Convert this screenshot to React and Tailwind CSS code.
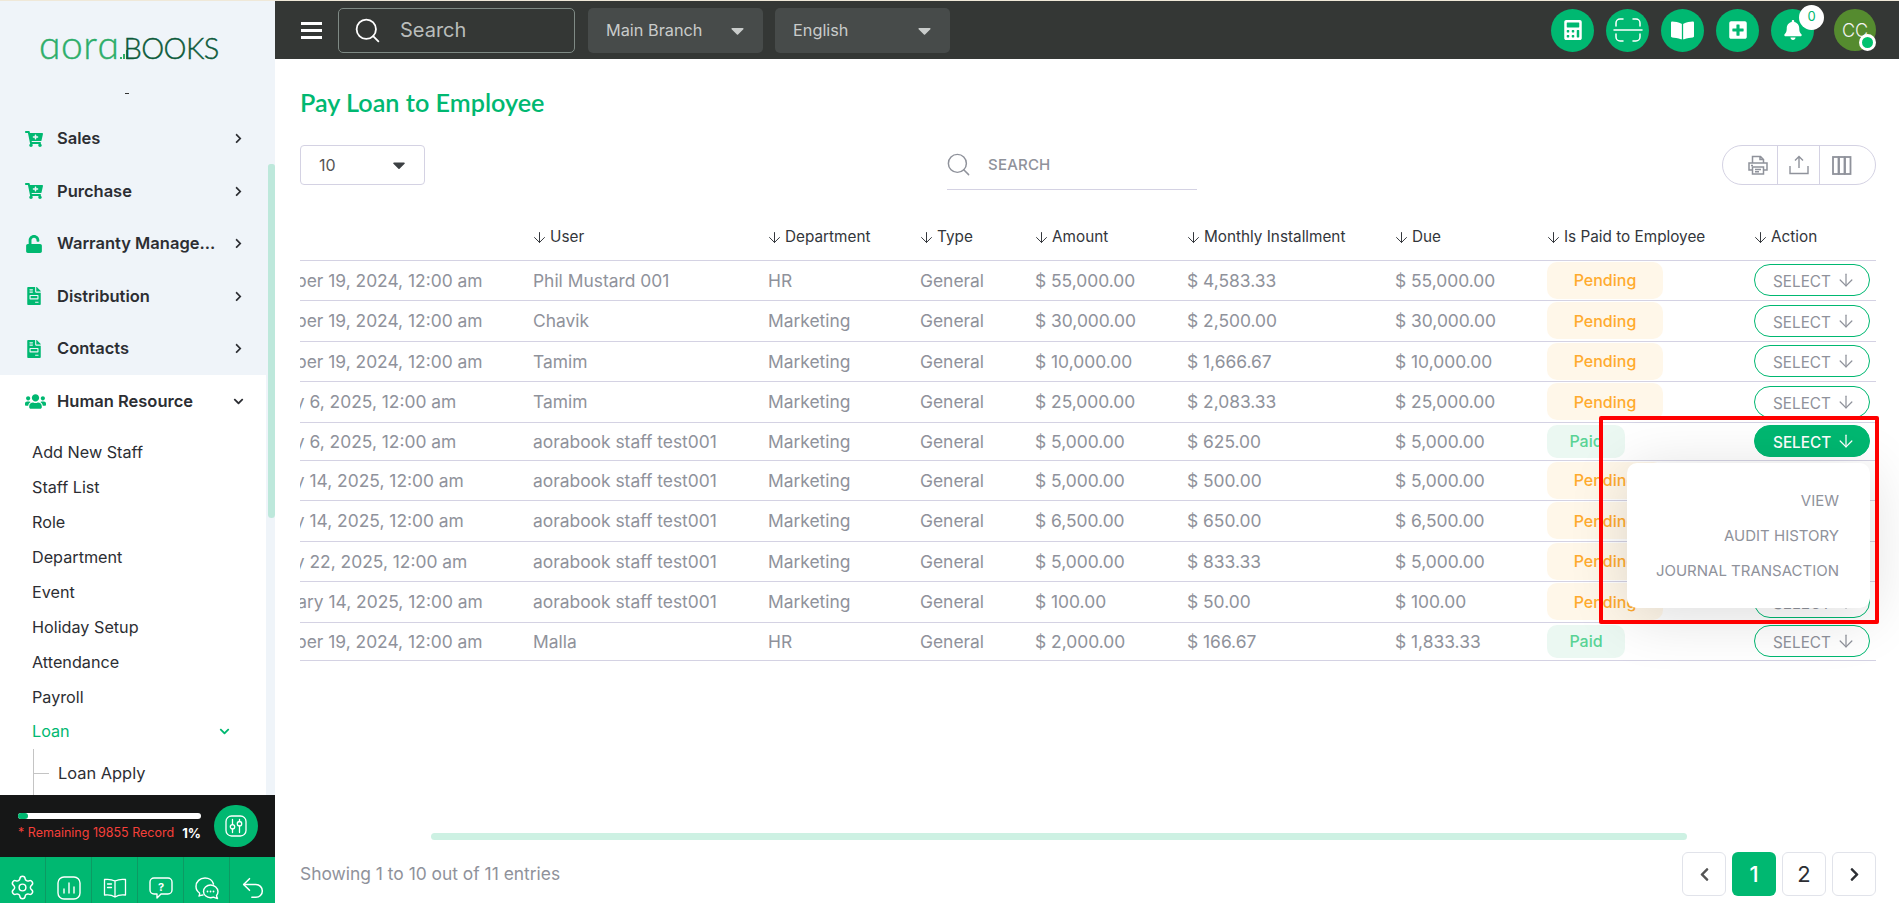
import React from 'react';
import { FaCartPlus, FaUnlock, FaFileInvoice, FaUsers, FaChevronRight, FaChevronDown, FaChevronLeft, FaCalculator, FaBookOpen, FaPlusSquare, FaBell, FaCaretDown } from 'react-icons/fa';
import { ArrowDown, Search, Settings, Undo2 } from 'lucide-react';

const rows = [
  ['November 19, 2024, 12:00 am', 'Phil Mustard 001', 'HR', '$ 55,000.00', '$ 4,583.33', '$ 55,000.00', 'Pending', 'h-[40px]'],
  ['November 19, 2024, 12:00 am', 'Chavik', 'Marketing', '$ 30,000.00', '$ 2,500.00', '$ 30,000.00', 'Pending', 'h-[41px]'],
  ['November 19, 2024, 12:00 am', 'Tamim', 'Marketing', '$ 10,000.00', '$ 1,666.67', '$ 10,000.00', 'Pending', 'h-[40px]'],
  ['January 6, 2025, 12:00 am', 'Tamim', 'Marketing', '$ 25,000.00', '$ 2,083.33', '$ 25,000.00', 'Pending', 'h-[41px]'],
  ['January 6, 2025, 12:00 am', 'aorabook staff test001', 'Marketing', '$ 5,000.00', '$ 625.00', '$ 5,000.00', 'Paid', 'h-[38px]'],
  ['January 14, 2025, 12:00 am', 'aorabook staff test001', 'Marketing', '$ 5,000.00', '$ 500.00', '$ 5,000.00', 'Pending', 'h-[40px]'],
  ['January 14, 2025, 12:00 am', 'aorabook staff test001', 'Marketing', '$ 6,500.00', '$ 650.00', '$ 6,500.00', 'Pending', 'h-[41px]'],
  ['January 22, 2025, 12:00 am', 'aorabook staff test001', 'Marketing', '$ 5,000.00', '$ 833.33', '$ 5,000.00', 'Pending', 'h-[40px]'],
  ['February 14, 2025, 12:00 am', 'aorabook staff test001', 'Marketing', '$ 100.00', '$ 50.00', '$ 100.00', 'Pending', 'h-[41px]', 'pl-[12px]'],
  ['November 19, 2024, 12:00 am', 'Malla', 'HR', '$ 2,000.00', '$ 166.67', '$ 1,833.33', 'Paid', 'h-[38px]'],
];

const mainNav = [
  ['Sales', FaCartPlus],
  ['Purchase', FaCartPlus],
  ['Warranty Manage...', FaUnlock],
  ['Distribution', FaFileInvoice],
  ['Contacts', FaFileInvoice],
];

const subNav = ['Add New Staff', 'Staff List', 'Role', 'Department', 'Event', 'Holiday Setup', 'Attendance', 'Payroll'];

const headers = ['User', 'Department', 'Type', 'Amount', 'Monthly Installment', 'Due', 'Is Paid to Employee', 'Action'];

function RoundIcon({ children }) {
  return <div className="flex h-[43px] w-[43px] items-center justify-center rounded-full bg-[#00b871] text-white">{children}</div>;
}

function FootIcon({ children, last }) {
  return <div className={`flex h-full flex-1 items-center justify-center pt-[15px] text-white ${last ? '' : 'border-r border-[#0c9a63]'}`}>{children}</div>;
}

function Logo() {
  return (
    <div className="mt-[18px] flex h-[40px] items-baseline pl-[39px] pt-[6px] leading-none">
      <span className="text-[39px] tracking-[0.5px] text-[#2dae69] [-webkit-text-stroke:0.4px_#2dae69]" style={{ fontFamily: 'Lato, sans-serif', fontWeight: 300 }}>ɑorɑ</span>
      <svg width="9" height="12" viewBox="0 0 9 12" className="flex-none"><path d="M0 12V10h2v2zM3 12V7h2v5zM6 12V3h2v9z" fill="#2dae69" /></svg>
      <span className="ml-[-5px] text-[29px] tracking-[-0.6px] text-[#0c5a3a] [-webkit-text-stroke:0.4px_#0c5a3a]" style={{ fontFamily: 'Lato, sans-serif', fontWeight: 300 }}>BOOKS</span>
    </div>
  );
}

function Sidebar() {
  return (
    <aside className="flex h-full w-[275px] flex-none flex-col bg-[#eff4f9]">
      <div className="flex min-h-0 flex-1">
        <div className="flex w-[266px] flex-none flex-col overflow-hidden">
          <div className="h-[111.25px] flex-none">
            <Logo />
            <div className="mt-[34px] ml-[125px] h-px w-[4px] bg-[#333]"></div>
          </div>
          {mainNav.map(([label, Icon]) => (
            <div key={label} className="flex h-[52.5px] flex-none items-center pl-[25px] pr-[22px] text-[#2c2e33]">
              <span className="flex w-[32px] flex-none text-[#00b871]"><Icon size={18} /></span>
              <span className="flex-1 whitespace-nowrap text-[16.5px] font-semibold">{label}</span>
              <FaChevronRight size={11} />
            </div>
          ))}
          <div className="flex-1 bg-white">
            <div className="flex h-[52.5px] items-center pl-[25px] pr-[22px] text-[#2c2e33]">
              <span className="flex w-[32px] flex-none text-[#00b871]"><FaUsers size={21} /></span>
              <span className="flex-1 text-[16.5px] font-semibold">Human Resource</span>
              <FaChevronDown size={11} />
            </div>
            <div className="pt-[7.25px] pl-[32px] text-[#2c2e33]">
              {subNav.map((s) => (
                <div key={s} className="flex h-[35px] items-center text-[16.2px]">{s}</div>
              ))}
              <div className="flex h-[34px] items-center pr-[36px] text-[16.2px] text-[#00b871]">
                <span className="flex-1">Loan</span>
                <FaChevronDown size={11} />
              </div>
              <div className="relative ml-[1px] flex h-[50px] items-center border-l border-[#c4c4c4] pl-[24px] text-[16.4px]">
                <span className="absolute left-0 top-[24px] h-px w-[15px] bg-[#c4c4c4]"></span>
                Loan Apply
              </div>
            </div>
          </div>
        </div>
        <div className="w-[9px] flex-none pl-[2px] pt-[163px]">
          <div className="h-[354px] w-[7px] rounded-t-[3px] rounded-b-[4px] bg-[#bde8db]"></div>
        </div>
      </div>
      <div className="flex h-[62px] flex-none items-start bg-[#161717] pl-[18px] text-white">
        <div className="w-[183px] pt-[18px]">
          <div className="h-[6px] w-full rounded-full bg-white">
            <div className="h-[6px] w-[10px] rounded-full bg-[#00b871]"></div>
          </div>
          <div className="mt-[6px] flex items-center justify-between whitespace-nowrap text-[12.5px] leading-[16px]">
            <span className="text-[#f5403a]">* Remaining 19855 Record</span>
            <span className="text-[13px] font-bold">1%</span>
          </div>
        </div>
        <div className="ml-[13px] mt-[10px] flex h-[42px] w-[44px] items-center justify-center rounded-full bg-[#00b871]">
          <svg width="22" height="22" viewBox="0 0 22 22" fill="none" stroke="white" strokeWidth="1.3" strokeLinecap="round">
            <rect x="1" y="1" width="20" height="20" rx="5.5" />
            <path d="M7.5 4.5v5M7.5 14v3.5M14.5 4.5v2M14.5 11v6.5" />
            <circle cx="7.5" cy="11.8" r="2.2" />
            <circle cx="14.5" cy="8.7" r="2.2" />
          </svg>
        </div>
      </div>
      <div className="flex h-[46px] flex-none bg-[#00b871]">
        <FootIcon><Settings size={27} strokeWidth={1.3} /></FootIcon>
        <FootIcon>
          <svg width="24" height="24" viewBox="0 0 24 24" fill="none" stroke="white" strokeWidth="1.4" strokeLinecap="round">
            <rect x="1" y="1" width="22" height="22" rx="6" /><path d="M7 17v-4M12 17V7M17 17v-6" />
          </svg>
        </FootIcon>
        <FootIcon>
          <svg width="24" height="22" viewBox="0 0 24 22" fill="none" stroke="white" strokeWidth="1.3" strokeLinejoin="round" strokeLinecap="round">
            <path d="M12 4C9 2.500 5 2 1.500 2.500V18c3.500-.5 7.500 0 10.500 2 3-2 7-2.500 10.500-2V2.500C19 2 15 2.500 12 4zM12 4v16M4.500 7h4M4.500 10.500h4" />
          </svg>
        </FootIcon>
        <FootIcon>
          <svg width="24" height="24" viewBox="0 0 24 24" fill="none" stroke="white" strokeWidth="1.4" strokeLinejoin="round">
            <path d="M5 2h14a4 4 0 0 1 4 4v8a4 4 0 0 1-4 4h-7l-4 4v-4H5a4 4 0 0 1-4-4V6a4 4 0 0 1 4-4z" />
            <text x="12" y="14.500" textAnchor="middle" fontSize="11" fontWeight="700" fill="white" stroke="none" fontFamily="Inter, sans-serif">?</text>
          </svg>
        </FootIcon>
        <FootIcon>
          <svg width="24" height="24" viewBox="0 0 24 24" fill="none" stroke="white" strokeWidth="1.4" strokeLinejoin="round" strokeLinecap="round">
            <path d="M8 19c-1 0-2 .5-4 1 .5-1 1-2 .5-3C2.500 15.500 1 13 1 10.500 1 5.500 5 2 10 2c4 0 7.500 2.500 8.500 6" />
            <path d="M15.500 9c4 0 7.500 3 7.500 6.500 0 1.500-.5 3-1.500 4 0 1 .5 2 1 3-1.500-.3-3-.8-4-1.300-1 .3-2 .5-3 .5-4 0-7-3-7-6.200S11.500 9 15.500 9z" />
            <path d="M12.500 15.500h.01M15.500 15.500h.01M18.500 15.500h.01" strokeWidth="1.8" />
          </svg>
        </FootIcon>
        <FootIcon last><Undo2 size={28} strokeWidth={1.3} /></FootIcon>
      </div>
    </aside>
  );
}

function Header() {
  return (
    <header className="flex h-[58px] flex-none items-center bg-[#343735] pl-[26px] pr-[23px]">
      <div className="flex w-[21px] flex-none flex-col gap-[4px]">
        <span className="h-[3px] bg-white"></span>
        <span className="h-[3px] bg-white"></span>
        <span className="h-[3px] bg-white"></span>
      </div>
      <div className="ml-[16px] flex h-[45px] w-[237px] flex-none items-center rounded-[5px] border border-[#7f8a85] pl-[14px] text-[#b9bdbb]">
        <Search size={29} strokeWidth={1.5} className="text-white" />
        <span className="ml-[18px] text-[20px]">Search</span>
      </div>
      <div className="ml-[13px] flex h-[45px] w-[175px] flex-none items-center justify-between rounded-[5px] bg-[#474b4a] pl-[18px] pr-[15px] text-[16.3px] text-[#c9cccb]">
        <span>Main Branch</span><FaCaretDown size={21} />
      </div>
      <div className="ml-[12px] flex h-[45px] w-[175px] flex-none items-center justify-between rounded-[5px] bg-[#474b4a] pl-[18px] pr-[15px] text-[16.3px] text-[#c9cccb]">
        <span>English</span><FaCaretDown size={21} />
      </div>
      <div className="ml-auto flex items-center gap-[12px]">
        <RoundIcon><FaCalculator size={20} /></RoundIcon>
        <RoundIcon>
          <svg width="30" height="24" viewBox="0 0 30 24" fill="none" stroke="white" strokeWidth="1.5" strokeLinecap="round">
            <path d="M10 1H7a4 4 0 0 0-4 4v3M20 1h3a4 4 0 0 1 4 4v3M10 23H7a4 4 0 0 1-4-4v-3M20 23h3a4 4 0 0 0 4-4v-3M1 12h28" />
          </svg>
        </RoundIcon>
        <RoundIcon><FaBookOpen size={23} /></RoundIcon>
        <RoundIcon><FaPlusSquare size={20} /></RoundIcon>
        <div className="relative">
          <RoundIcon><FaBell size={20} /></RoundIcon>
          <span className="absolute left-[28px] top-[-4px] flex h-[25px] w-[25px] items-center justify-center rounded-full bg-white text-[13px] text-[#00b871]">0</span>
        </div>
        <div className="relative ml-[8px] flex h-[42px] w-[42px] items-center justify-center rounded-full bg-[#558b2f] text-[18px] font-light text-[#f2f2f2]">
          CC
          <span className="absolute bottom-0 right-0 h-[17px] w-[17px] rounded-full border-[3px] border-white bg-[#00c26e]"></span>
        </div>
      </div>
    </header>
  );
}

function Toolbar() {
  return (
    <div className="mt-[28px] flex items-start justify-between">
      <div className="flex h-[40px] w-[125px] items-center justify-between rounded-[4px] border border-[#d4d2e3] pl-[18px] pr-[15px] text-[16px] text-[#555]">
        <span>10</span><FaCaretDown size={20} className="text-[#3c4043]" />
      </div>
      <div className="mr-[3px] flex h-[45px] w-[250px] items-start border-b border-[#d4d2e3] pt-[6px] text-[#8f929b]">
        <Search size={27} strokeWidth={1.3} className="ml-[-2px]" />
        <span className="ml-[16px] mt-[3px] text-[15px] font-medium tracking-[0.2px]">SEARCH</span>
      </div>
      <div className="flex h-[40px] w-[154px] rounded-full border border-[#d4d2e3] text-[#8f929b]">
        <div className="flex w-[55px] items-center justify-end border-r border-[#d4d2e3] pr-[9px]">
          <svg width="20" height="20" viewBox="0 0 20 20" fill="none" stroke="currentColor" strokeWidth="1.500">
            <path d="M4.500 8V1.500h8l3 3V8M4.500 15H1V8h18v7h-3.500M4.500 12h11v7h-11zM7 14.500h6M7 16.800h4M12 1.500v3h3.500" />
            <path d="M3 10.500h2" />
          </svg>
        </div>
        <div className="flex w-[42px] items-center justify-center border-r border-[#d4d2e3]">
          <svg width="20" height="20" viewBox="0 0 20 20" fill="none" stroke="currentColor" strokeWidth="1.400">
            <path d="M10 13V1.500M6 5.500l4-4 4 4M1 11v7.500h18V11" />
          </svg>
        </div>
        <div className="flex flex-1 items-center justify-start pl-[12px]">
          <svg width="20" height="19" viewBox="0 0 20 19" fill="none" stroke="currentColor" strokeWidth="1.800">
            <rect x="1" y="1" width="5.500" height="17" /><rect x="7" y="1" width="5.500" height="17" /><rect x="13" y="1" width="5.500" height="17" />
          </svg>
        </div>
      </div>
    </div>
  );
}

function DataTable() {
  return (
    <div className="mt-[22px] overflow-hidden">
      <table className="ml-[-62px] w-[1639px] table-fixed border-collapse text-left text-[17.4px] text-[#8f929b]">
        <colgroup>
          <col className="w-[295px]" /><col className="w-[235px]" /><col className="w-[152px]" /><col className="w-[115px]" />
          <col className="w-[152px]" /><col className="w-[208px]" /><col className="w-[152px]" /><col className="w-[207px]" /><col className="w-[123px]" />
        </colgroup>
        <thead>
          <tr className="h-[48px] border-b border-[#d4d2e3] text-[15.3px] text-[#33363b]">
            <th className="font-normal"></th>
            {headers.map((h) => (
              <th key={h} className="whitespace-nowrap pt-[4px] font-normal">
                <span className="ml-[-2px] flex items-center gap-[2px]"><ArrowDown size={17} strokeWidth={1.400} />{h}</span>
              </th>
            ))}
          </tr>
        </thead>
        <tbody>
          {rows.map((r, i) => {
            const paid = r[6] === 'Paid';
            const active = i === 4;
            return (
              <tr key={i} className={`${r[7]} border-b border-[#d4d2e3]`}>
                <td className={`overflow-hidden whitespace-nowrap pt-[2px] ${r[8] || ''}`}>{r[0]}</td>
                <td className="whitespace-nowrap pt-[2px]">{r[1]}</td>
                <td className="pt-[2px]">{r[2]}</td>
                <td className="pt-[2px]">General</td>
                <td className="pt-[2px]">{r[3]}</td>
                <td className="pt-[2px]">{r[4]}</td>
                <td className="pt-[2px]">{r[5]}</td>
                <td>
                  {paid ? (
                    <span className="flex h-[33px] w-[78px] items-center justify-center rounded-[10px] bg-[#ebf8f2] text-[16px] font-medium text-[#58d395]">Paid</span>
                  ) : (
                    <span className="flex h-[37px] w-[116px] items-center justify-center rounded-[10px] bg-[#fff7e9] text-[16px] font-medium text-[#ffab2e]">Pending</span>
                  )}
                </td>
                <td>
                  <span className={`flex h-[32px] w-[116px] items-center gap-[5px] rounded-full border border-[#00b871] pl-[18px] text-[15.3px] ${active ? 'bg-[#00b871] font-medium text-white' : 'text-[#8f929b]'}`}>
                    <span className="mt-[5px]">SELECT</span> <ArrowDown size={20} strokeWidth={1.500} />
                  </span>
                </td>
              </tr>
            );
          })}
        </tbody>
      </table>
    </div>
  );
}

function Pager({ children, active }) {
  return (
    <div className={`flex h-[44px] w-[44px] items-center justify-center rounded-[6px] text-[22px] ${active ? 'bg-[#00b871] font-medium text-white' : 'border border-[#e1e3ea] text-[#2c2e33]'}`}>
      {children}
    </div>
  );
}

export default function App() {
  return (
    <div className="flex h-screen w-screen flex-col overflow-hidden bg-white" style={{ fontFamily: 'Inter, "Liberation Sans", sans-serif' }}>
      <div className="h-px flex-none bg-[#efe8d8]"></div>
      <div className="flex min-h-0 flex-1">
        <Sidebar />
        <div className="relative flex min-w-0 flex-1 flex-col">
          <Header />
          <main className="flex min-h-0 flex-1 flex-col pl-[25px] pr-[23px] pb-[7px]">
            <h1 className="mt-[28px] text-[25.2px] font-semibold leading-[30px] text-[#00b871]" style={{ fontFamily: 'Lato, sans-serif' }}>Pay Loan to Employee</h1>
            <Toolbar />
            <DataTable />
            <div className="mt-auto ml-[131px] h-[7px] w-[1256px] flex-none rounded-full bg-[#cdf1e3]"></div>
            <div className="mt-[12px] flex h-[44px] flex-none items-center justify-between">
              <span className="text-[17.4px] text-[#8f929b]">Showing 1 to 10 out of 11 entries</span>
              <div className="flex gap-[6px]">
                <Pager><FaChevronLeft size={15} className="text-[#555]" /></Pager>
                <Pager active>1</Pager>
                <Pager>2</Pager>
                <Pager><FaChevronRight size={15} /></Pager>
              </div>
            </div>
          </main>
          <div className="absolute left-[1352px] top-[462px] flex h-[145px] w-[243px] flex-col items-end justify-center gap-[14px] rounded-[10px] bg-white pr-[31px] text-[15px] leading-[21px] text-[#8f929b] shadow-[0_8px_60px_rgba(0,0,0,0.14)]">
            <span>VIEW</span>
            <span>AUDIT HISTORY</span>
            <span>JOURNAL TRANSACTION</span>
          </div>
          <div className="pointer-events-none absolute left-[1324px] top-[415px] h-[208px] w-[280px] rounded-[2px] border-[4px] border-[#ff0000]"></div>
        </div>
      </div>
    </div>
  );
}
